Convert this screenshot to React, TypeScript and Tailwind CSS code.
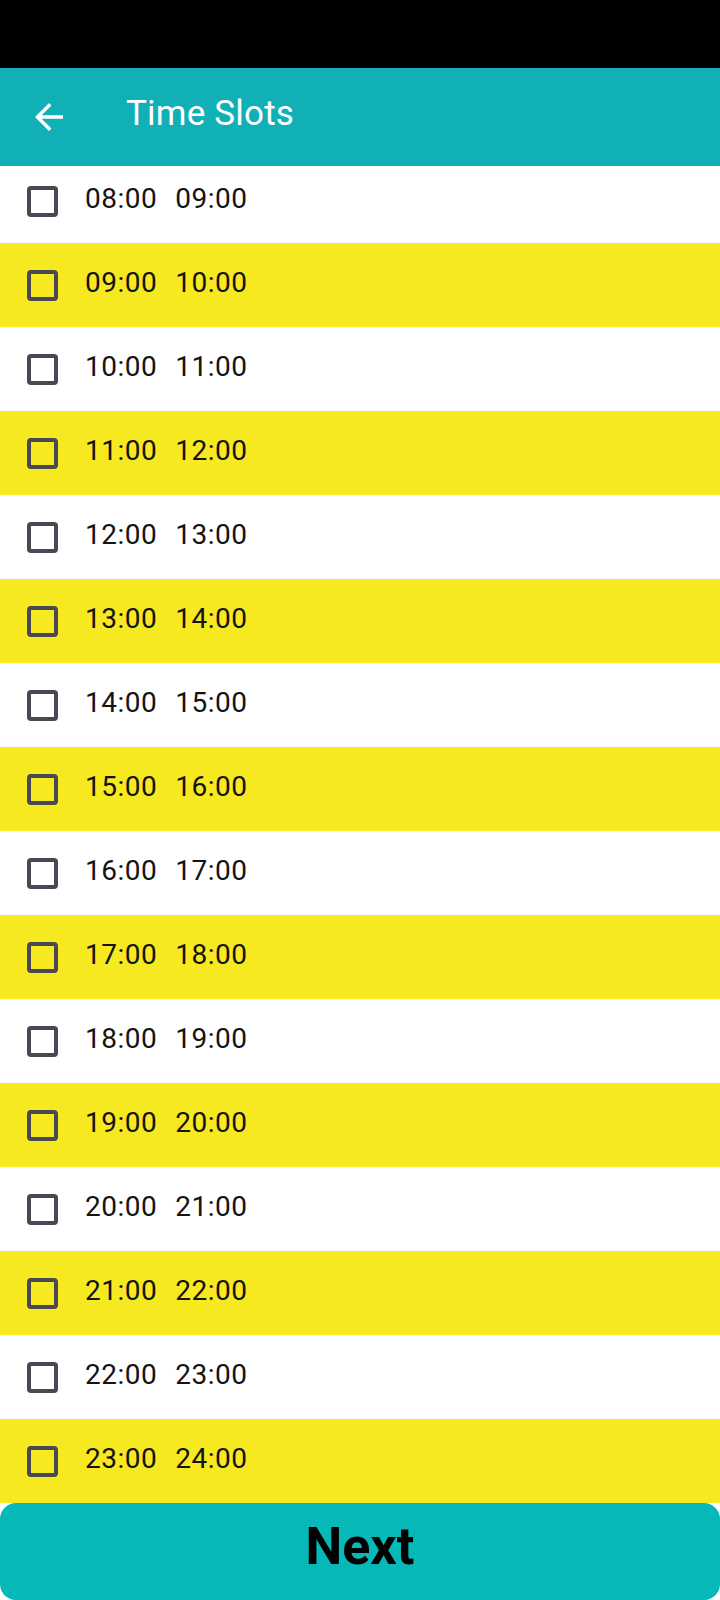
import React from "react";

const slots = [
  ["08:00", "09:00"],
  ["09:00", "10:00"],
  ["10:00", "11:00"],
  ["11:00", "12:00"],
  ["12:00", "13:00"],
  ["13:00", "14:00"],
  ["14:00", "15:00"],
  ["15:00", "16:00"],
  ["16:00", "17:00"],
  ["17:00", "18:00"],
  ["18:00", "19:00"],
  ["19:00", "20:00"],
  ["20:00", "21:00"],
  ["21:00", "22:00"],
  ["22:00", "23:00"],
  ["23:00", "24:00"],
];

export default function App() {
  return (
    <div
      className="w-[720px] h-[1600px] flex flex-col overflow-hidden bg-white"
      style={{ fontFamily: "Roboto, 'Noto Sans', sans-serif" }}
    >
      <div className="h-[68px] bg-black shrink-0" />
      <div className="h-[98px] bg-[#10b0b6] shrink-0 flex items-center">
        <svg
          className="ml-[28px] w-[42px] h-[42px]"
          viewBox="0 0 24 24"
          fill="#ffffff"
        >
          <path d="M20 11H7.83l5.59-5.59L12 4l-8 8 8 8 1.41-1.41L7.83 13H20v-2z" />
        </svg>
        <div className="ml-[56px] pb-[8px] text-[35px] leading-none text-white tracking-[0.2px]">
          Time Slots
        </div>
      </div>
      <div className="h-[1337px] shrink-0 overflow-hidden">
        <div className="-mt-[7px] flex flex-col">
          {slots.map(([a, b], i) => (
            <div
              key={a}
              className={`h-[84px] shrink-0 flex items-center ${
                i % 2 === 1 ? "bg-[#f6e920]" : "bg-white"
              }`}
            >
              <div className="ml-[27px] w-[31px] h-[31px] border-[4px] border-[#4a4852] rounded-[4px] box-border" />
              <div className="ml-[27px] mb-[5px] flex text-[28px] leading-none text-[#141414] tracking-[0.5px]">
                <span>{a}</span>
                <span className="ml-[18px]">{b}</span>
              </div>
            </div>
          ))}
        </div>
      </div>
      <div className="h-[97px] shrink-0 bg-[#06b8b8] rounded-[16px] flex items-center justify-center">
        <span className="pb-[10px] text-[52px] font-bold leading-none text-black">
          Next
        </span>
      </div>
    </div>
  );
}
